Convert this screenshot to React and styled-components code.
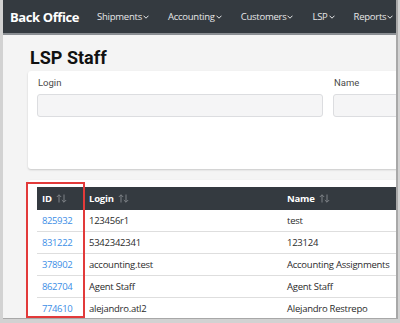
import styled, { createGlobalStyle } from 'styled-components';

const GlobalStyle = createGlobalStyle`
  body {
    margin: 0;
    background: #d2d2d2;
  }
`;

const navItems = ['Shipments', 'Accounting', 'Customers', 'LSP', 'Reports'];

const rows = [
    { id: '825932', login: '123456r1', name: 'test' },
    { id: '831222', login: '5342342341', name: '123124' },
    { id: '378902', login: 'accounting.test', name: 'Accounting Assignments' },
    { id: '862704', login: 'Agent Staff', name: 'Agent Staff' },
    { id: '774610', login: 'alejandro.atl2', name: 'Alejandro Restrepo' },
];

function Chevron() {
    return (
        <svg width="6" height="4" viewBox="0 0 6 4">
            <path d="M0.5 0.7 L3 3.2 L5.5 0.7" fill="none" stroke="currentColor" strokeWidth="1" />
        </svg>
    );
}

function SortIcon() {
    return (
        <svg width="11" height="9" viewBox="0 0 11 9">
            <path d="M3 8.5 V0.8 M0.8 3 L3 0.8 L5.2 3" fill="none" stroke="#7d8186" strokeWidth="1" />
            <path d="M8 0.5 V8.2 M5.8 6 L8 8.2 L10.2 6" fill="none" stroke="#7d8186" strokeWidth="1" />
        </svg>
    );
}

export default function App() {
    return (
        <Screen>
            <GlobalStyle />
            <Window>
                <Navbar>
                    <Brand>Back Office</Brand>
                    <NavMenu>
                        {navItems.map((item) => (
                            <NavItem key={item}>
                                {item}
                                <Chevron />
                            </NavItem>
                        ))}
                    </NavMenu>
                </Navbar>

                <Main>
                    <Title>LSP Staff</Title>

                    <Card className='filters'>
                        <Field>
                            <Label>Login</Label>
                            <Input />
                        </Field>
                        <Field>
                            <Label>Name</Label>
                            <Input />
                        </Field>
                    </Card>

                    <Card className='list'>
                        <Table>
                            <colgroup>
                                <col style={{ width: 47 }} />
                                <col style={{ width: 198 }} />
                                <col />
                            </colgroup>
                            <thead>
                                <tr>
                                    <Th>ID <SortIcon /></Th>
                                    <Th>Login <SortIcon /></Th>
                                    <Th>Name <SortIcon /></Th>
                                </tr>
                            </thead>
                            <tbody>
                                {rows.map((row) => (
                                    <tr key={row.id}>
                                        <Td><IdLink>{row.id}</IdLink></Td>
                                        <Td>{row.login}</Td>
                                        <Td>{row.name}</Td>
                                    </tr>
                                ))}
                            </tbody>
                        </Table>
                    </Card>
                </Main>
            </Window>
            <Highlight />
        </Screen>
    );
}

const Screen = styled.div`
    position: relative;
    width: 400px;
    height: 323px;
    overflow: hidden;
`

const Window = styled.div`
    margin-left: 3px;
    width: 393px;
    height: 318px;
    background: #f4f4f4;
    border-right: 2px solid #a8a8a8;
    border-bottom: 1px solid #a8a8a8;
    overflow: hidden;
    display: flex;
    flex-direction: column;
`

const Navbar = styled.div`
    height: 33px;
    flex-shrink: 0;
    background: #343a40;
    border-bottom: 2px solid #8a8e93;
    display: flex;
    align-items: center;
    padding-left: 7px;
`

const Brand = styled.div`
    font-family: 'Open Sans', sans-serif;
    font-weight: 700;
    font-size: 13px;
    color: #ffffff;
    letter-spacing: -0.4px;
    white-space: nowrap;
`

const NavMenu = styled.div`
    display: flex;
    gap: 19px;
    margin-left: 18px;
`

const NavItem = styled.div`
    display: flex;
    align-items: center;
    gap: 1px;
    font-family: 'Open Sans', sans-serif;
    font-size: 9.5px;
    color: #e6e7e8;
    letter-spacing: -0.25px;
    white-space: nowrap;
`

const Main = styled.div`
    padding-left: 25px;
    width: 520px;
`

const Title = styled.h1`
    margin: 12px 0 3px 2px;
    font-family: 'Roboto', sans-serif;
    font-weight: 700;
    font-size: 18px;
    line-height: 21px;
    color: #111111;
`

const Card = styled.div`
    background: #ffffff;
    border-radius: 3px;
    box-shadow: 0 1px 2px rgba(0, 0, 0, 0.18);

    &.filters {
        height: 98px;
        box-sizing: border-box;
        padding: 6px 0 0 9px;
        display: grid;
        grid-template-columns: 286px 1fr;
        gap: 10px;
    }

    &.list {
        margin-top: 11px;
        padding: 7px 0 0 9px;
    }
`

const Field = styled.div`
    display: flex;
    flex-direction: column;
`

const Label = styled.div`
    font-family: 'Roboto', sans-serif;
    font-size: 9.5px;
    color: #4a4a4a;
    height: 17px;
    line-height: 12px;
    padding-left: 1px;
`

const Input = styled.div`
    height: 21px;
    background: #f5f5f6;
    border: 1px solid #dcdde0;
    border-radius: 3px;
`

const Table = styled.table`
    width: 480px;
    table-layout: fixed;
    border-collapse: collapse;
    font-family: 'Open Sans', sans-serif;
    font-size: 9.5px;
`

const Th = styled.th`
    height: 23px;
    background: #343a40;
    color: #ffffff;
    font-weight: 700;
    text-align: left;
    padding: 0 5px;
    letter-spacing: -0.2px;

    svg {
        margin-left: 2px;
        vertical-align: -1px;
    }
`

const Td = styled.td`
    height: 21px;
    padding: 0 5px;
    color: #2b2b2b;
    border-bottom: 1px solid #dedede;
    letter-spacing: -0.25px;
    white-space: nowrap;
`

const IdLink = styled.span`
    color: #3d8ee6;
    letter-spacing: -0.4px;
`

const Highlight = styled.div`
    position: absolute;
    left: 26px;
    top: 182px;
    width: 55px;
    height: 132px;
    border: 2px solid #e23a3a;
    pointer-events: none;
`
